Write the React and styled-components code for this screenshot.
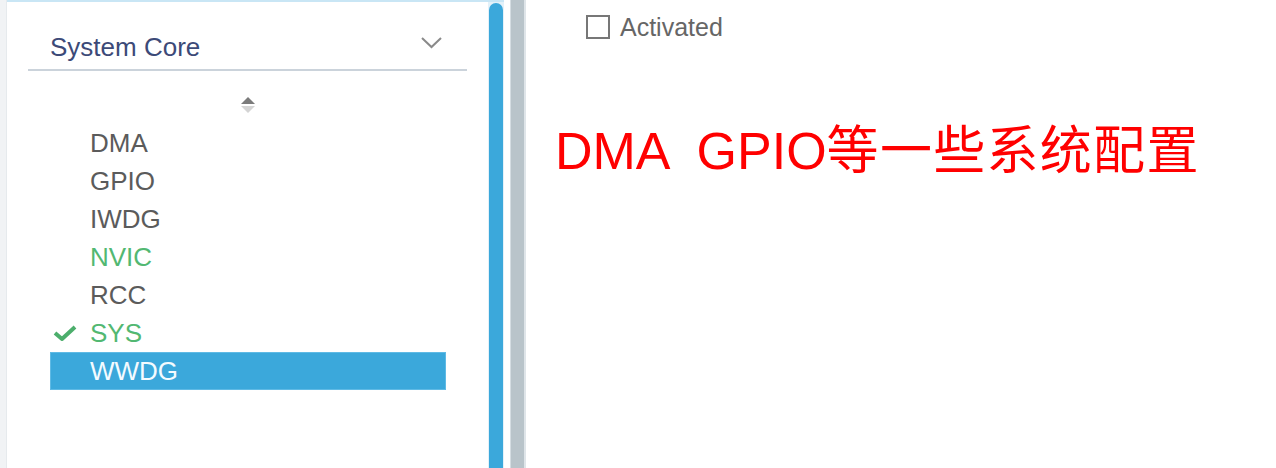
import React from "react";
import styled, { createGlobalStyle } from "styled-components";

const Global = createGlobalStyle`
  html, body { margin: 0; padding: 0; background: #ffffff; }
  body { font-family: "Liberation Sans", Arial, sans-serif; }
  #root { height: 468px; }
`;

const Page = styled.div`
  display: flex;
  height: 468px;
  overflow: hidden;
  background: #ffffff;
`;

const LeftEdge = styled.div`
  width: 7px;
  flex: none;
  background: #f1f3f5;
  border-right: 1px solid #e6eaed;
  box-sizing: border-box;
`;

const Sidebar = styled.div`
  display: flex;
  width: 497px;
  flex: none;
  border-top: 2px solid #c9e6f5;
  box-sizing: border-box;
`;

const Panel = styled.div`
  width: 481px;
  flex: none;
  padding-top: 32px;
  box-sizing: border-box;
  display: flex;
  flex-direction: column;
`;

const Header = styled.div`
  margin: 0 21px;
  display: flex;
  align-items: flex-start;
  justify-content: space-between;
  padding: 0 25px 9px 22px;
  border-bottom: 2px solid #cbd3db;
`;

const Title = styled.span`
  font-size: 26px;
  line-height: 26px;
  color: #3c4a78;
`;

const Chevron = styled.svg`
  margin-top: 3px;
  flex: none;
`;

const SortWrap = styled.div`
  margin: 26px 0 0 43px;
  width: 396px;
  height: 16px;
  display: flex;
  justify-content: center;
`;

const List = styled.ul`
  list-style: none;
  margin: 11px 0 0 43px;
  padding: 0;
  width: 396px;
`;

const Item = styled.li`
  position: relative;
  height: 38px;
  line-height: 38px;
  padding-left: 40px;
  font-size: 26px;
  color: ${(p) => (p.$selected ? "#f4fbff" : p.$green ? "#52b872" : "#5b5b5b")};
  background: ${(p) => (p.$selected ? "#3ba8db" : "transparent")};
  box-shadow: ${(p) => (p.$selected ? "inset 0 0 0 1px #5fbae5" : "none")};
`;

const Check = styled.svg`
  position: absolute;
  left: 3px;
  top: 11px;
`;

const ScrollTrack = styled.div`
  width: 16px;
  flex: none;
  padding: 1px 1px 0 1px;
  box-sizing: border-box;
  background: #e3f1f9;
`;

const Thumb = styled.div`
  height: 100%;
  background: #3ba8db;
  border-radius: 7px 7px 0 0;
`;

const Gap = styled.div`
  width: 6px;
  flex: none;
  background: #ffffff;
`;

const Splitter = styled.div`
  width: 16px;
  flex: none;
  background: #b9c4ca;
  border-left: 1px solid #d5dde2;
  border-right: 2px solid #dfe5e9;
  box-sizing: border-box;
`;

const Content = styled.div`
  flex: 1;
  padding: 14px 0 0 29px;
  box-sizing: border-box;
`;

const CheckRow = styled.label`
  display: flex;
  align-items: center;
  gap: 10px;
  padding-left: 31px;
  height: 26px;
`;

const Box = styled.span`
  width: 24px;
  height: 24px;
  box-sizing: border-box;
  border: 2px solid #777777;
  background: #ffffff;
  flex: none;
`;

const CheckLabel = styled.span`
  font-size: 25px;
  line-height: 26px;
  color: #666666;
`;

const Note = styled.div`
  margin-top: 81px;
  font-family: "Liberation Sans", "Noto Sans CJK SC", sans-serif;
  font-size: 52px;
  line-height: 60px;
  color: #ff0000;
  white-space: pre;
`;

const Cjk = styled.span`
  letter-spacing: 1.3px;
`;

const items = [
  { name: "DMA" },
  { name: "GPIO" },
  { name: "IWDG" },
  { name: "NVIC", green: true },
  { name: "RCC" },
  { name: "SYS", green: true, checked: true },
  { name: "WWDG", selected: true },
];

export default function App() {
  return (
    <>
      <Global />
      <Page>
        <LeftEdge />
        <Sidebar>
          <Panel>
            <Header>
              <Title>System Core</Title>
              <Chevron width="21" height="12" viewBox="0 0 21 12">
                <path d="M1 1 L10.5 10 L20 1" fill="none" stroke="#8a8a8a" strokeWidth="2" />
              </Chevron>
            </Header>
            <SortWrap>
              <svg width="14" height="16" viewBox="0 0 14 16">
                <path d="M7 0 L14 7 L0 7 Z" fill="#7b7b7b" />
                <path d="M0 9 L14 9 L7 16 Z" fill="#d4d4d4" />
              </svg>
            </SortWrap>
            <List>
              {items.map((it) => (
                <Item key={it.name} $green={it.green} $selected={it.selected}>
                  {it.checked && (
                    <Check width="24" height="16" viewBox="0 0 24 16">
                      <path d="M2 8 L9 14 L22 2" fill="none" stroke="#4cae6c" strokeWidth="4" strokeLinejoin="round" />
                    </Check>
                  )}
                  {it.name}
                </Item>
              ))}
            </List>
          </Panel>
          <ScrollTrack>
            <Thumb />
          </ScrollTrack>
        </Sidebar>
        <Gap />
        <Splitter />
        <Content>
          <CheckRow>
            <Box />
            <CheckLabel>Activated</CheckLabel>
          </CheckRow>
          <Note>
            {"DMA  GPIO"}
            <Cjk>等一些系统配置</Cjk>
          </Note>
        </Content>
      </Page>
    </>
  );
}
